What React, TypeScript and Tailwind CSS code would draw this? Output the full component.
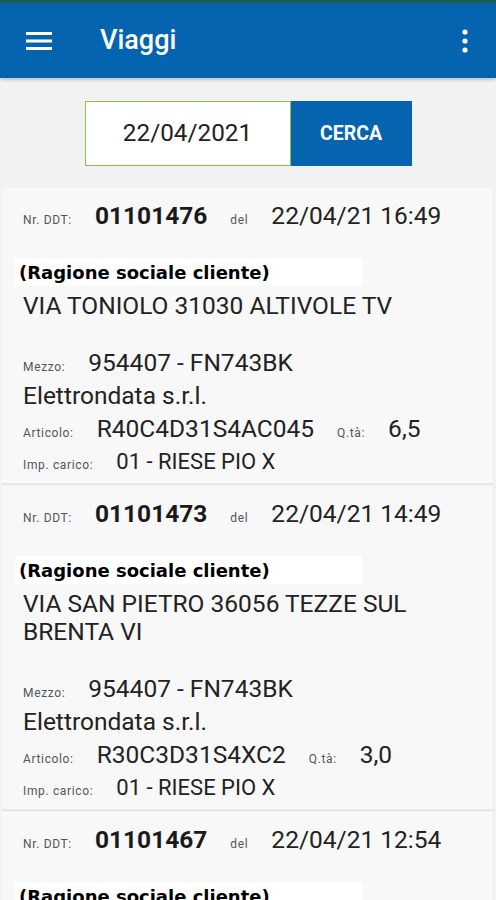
import React from "react";

type Trip = {
  nr: string;
  date: string;
  address: string;
  mezzo: string;
  company: string;
  articolo: string;
  qta: string;
  imp: string;
};

const trips: Trip[] = [
  {
    nr: "01101476",
    date: "22/04/21 16:49",
    address: "VIA TONIOLO 31030 ALTIVOLE TV",
    mezzo: "954407 - FN743BK",
    company: "Elettrondata s.r.l.",
    articolo: "R40C4D31S4AC045",
    qta: "6,5",
    imp: "01 - RIESE PIO X",
  },
  {
    nr: "01101473",
    date: "22/04/21 14:49",
    address: "VIA SAN PIETRO 36056 TEZZE SUL BRENTA VI",
    mezzo: "954407 - FN743BK",
    company: "Elettrondata s.r.l.",
    articolo: "R30C3D31S4XC2",
    qta: "3,0",
    imp: "01 - RIESE PIO X",
  },
  {
    nr: "01101467",
    date: "22/04/21 12:54",
    address: "VIA ROMA 31039 RIESE PIO X TV",
    mezzo: "954407 - FN743BK",
    company: "Elettrondata s.r.l.",
    articolo: "R30C3D31S4XC2",
    qta: "3,0",
    imp: "01 - RIESE PIO X",
  },
];

function Label({ children }: { children: React.ReactNode }) {
  return <span className="text-[12px] tracking-[0.65px] text-[#555555]">{children}</span>;
}

function Card({ t }: { t: Trip }) {
  return (
    <div className="shrink-0 mx-[2px] bg-[#f8f8f8] border-b-2 border-[#e6e6e6] border-r border-r-[#ececec] pt-[10px] pb-[6px]">
      <div className="h-[36px] flex items-baseline gap-[23px] pl-[21px] leading-[36px]">
        <Label>Nr. DDT:</Label>
        <span className="text-[24.5px] font-bold text-[#1a1a1a]">{t.nr}</span>
        <Label>del</Label>
        <span className="text-[24.5px] text-[#222222]">{t.date}</span>
      </div>
      <div className="mt-[24px] ml-[13px] w-[347px] h-[28px] bg-white flex items-center pl-[4px]">
        <span
          className="text-[18px] font-bold text-black"
          style={{ fontFamily: '"DejaVu Sans", sans-serif' }}
        >
          (Ragione sociale cliente)
        </span>
      </div>
      <div className="mt-[6px] pl-[21px] pr-[20px] text-[24.5px] leading-[28px] text-[#222222]">
        {t.address}
      </div>
      <div className="mt-[26px] pl-[21px] text-[#222222]">
        <div className="h-[33px] flex items-baseline gap-[23px] leading-[33px]">
          <Label>Mezzo:</Label>
          <span className="text-[24.5px]">{t.mezzo}</span>
        </div>
        <div className="h-[33px] leading-[33px] text-[24.5px]">{t.company}</div>
        <div className="h-[34px] flex items-baseline gap-[23px] leading-[34px]">
          <Label>Articolo:</Label>
          <span className="text-[24.5px]">{t.articolo}</span>
          <Label>Q.tà:</Label>
          <span className="text-[24.5px]">{t.qta}</span>
        </div>
        <div className="h-[31px] flex items-baseline gap-[23px] leading-[31px]">
          <Label>Imp. carico:</Label>
          <span className="text-[22px]">{t.imp}</span>
        </div>
      </div>
    </div>
  );
}

export default function App() {
  return (
    <div
      className="w-[496px] h-[900px] overflow-hidden bg-[#f2f2f2] flex flex-col"
      style={{ fontFamily: 'Roboto, "Liberation Sans", sans-serif' }}
    >
      <div className="shrink-0 h-[3px] bg-[#1c5e52]" />
      <div className="shrink-0 h-[75px] bg-[#0564b0] flex items-center shadow-[0_2px_3px_rgba(0,0,0,0.2)] relative z-10">
        <div className="w-[100px] pl-[26px] flex items-center">
          <svg width="26" height="20" viewBox="0 0 26 20">
            <rect x="0" y="1" width="26" height="3" fill="white" />
            <rect x="0" y="8.5" width="26" height="3" fill="white" />
            <rect x="0" y="16" width="26" height="3" fill="white" />
          </svg>
        </div>
        <div className="flex-1 text-white text-[27px] font-medium">Viaggi</div>
        <div className="w-[60px] flex justify-center pr-[2px]">
          <svg width="6" height="24" viewBox="0 0 6 24">
            <circle cx="3" cy="3" r="2.6" fill="white" />
            <circle cx="3" cy="12" r="2.6" fill="white" />
            <circle cx="3" cy="21" r="2.6" fill="white" />
          </svg>
        </div>
      </div>
      <div className="shrink-0 flex justify-center pt-[23px] pb-[22px]">
        <div className="flex h-[65px]">
          <div className="w-[206px] bg-white border border-[#8bc34a] flex items-center justify-center text-[24.3px] text-[#222222]">
            22/04/2021
          </div>
          <div className="w-[121px] bg-[#0564b0] flex items-center justify-center text-white text-[19.5px] font-bold">
            CERCA
          </div>
        </div>
      </div>
      <div className="shrink-0 flex flex-col gap-[1px]">
        {trips.map((t) => (
          <Card key={t.nr} t={t} />
        ))}
      </div>
    </div>
  );
}
